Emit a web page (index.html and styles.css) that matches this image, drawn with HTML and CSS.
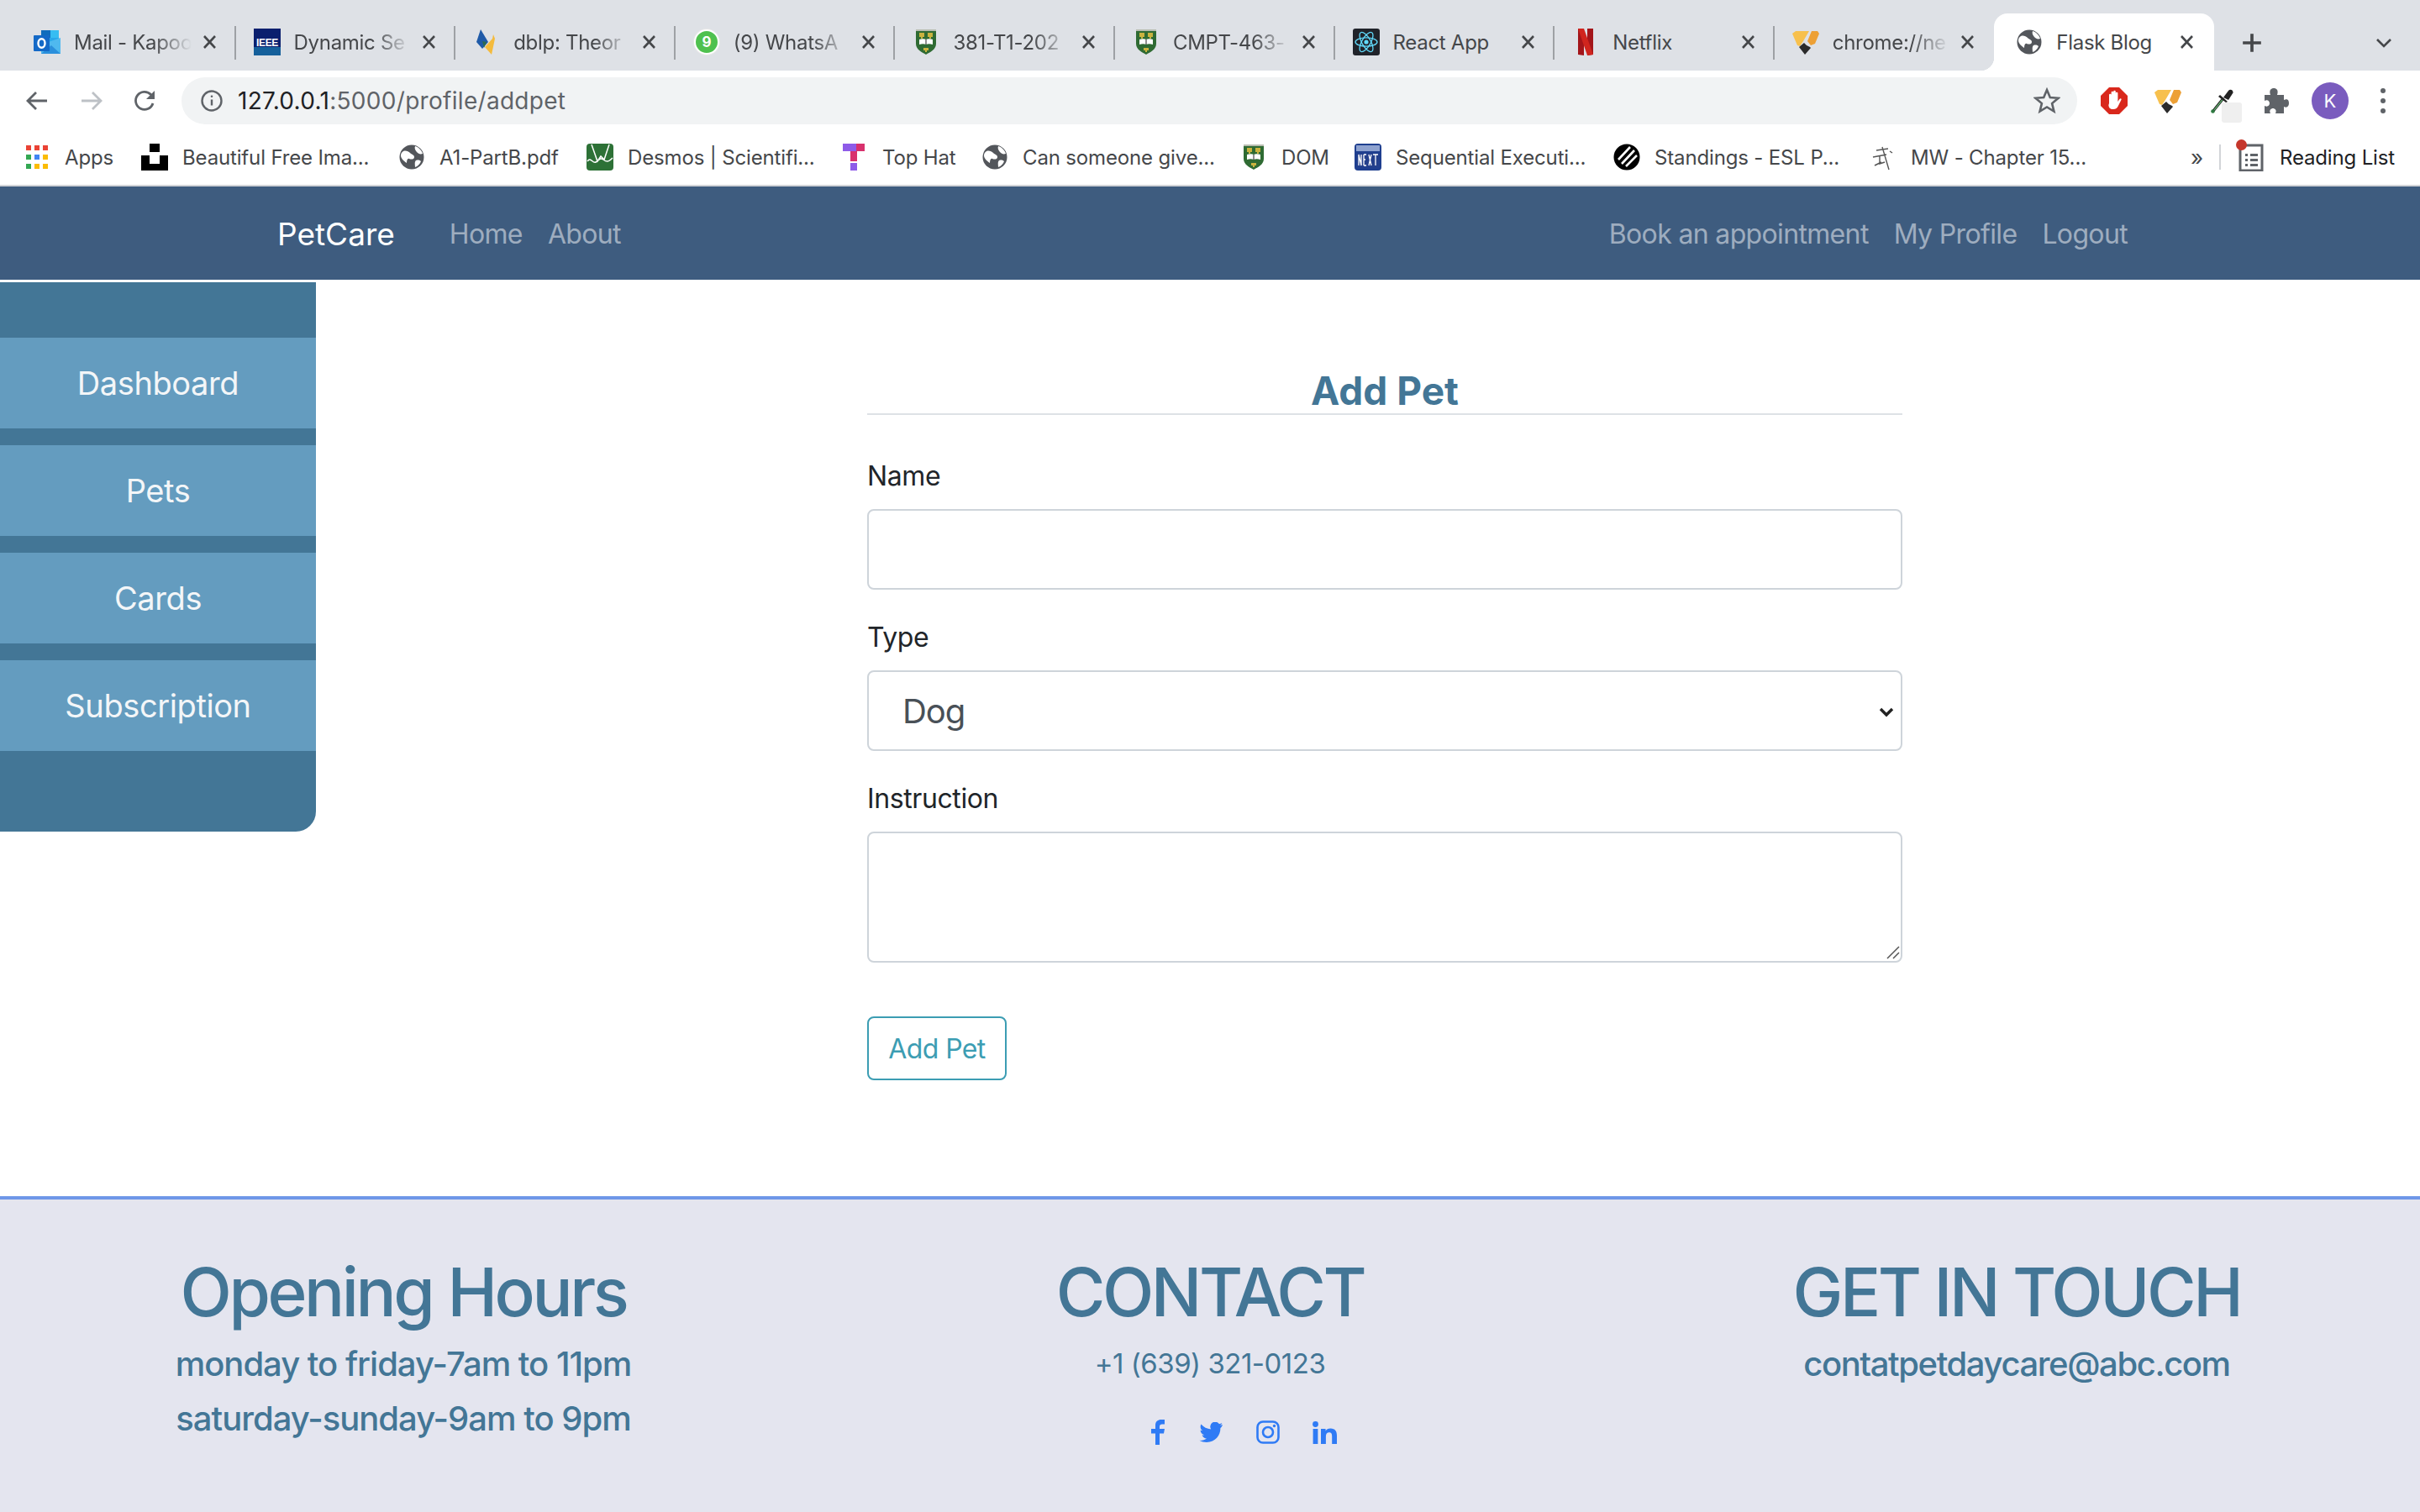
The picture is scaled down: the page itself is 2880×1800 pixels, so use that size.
FILE: index.html
```html
<!DOCTYPE html>
<html lang="en">
<head>
<meta charset="utf-8">
<title>Flask Blog</title>
<link rel="stylesheet" href="styles.css">
</head>
<body>
<svg class="defs" xmlns="http://www.w3.org/2000/svg">
  <symbol id="globe" viewBox="0 0 32 32"><circle cx="16" cy="16" r="14.5" fill="#53565b"/><path d="M6 9c3-1 6 0 8 2s5 2 5 5-4 3-6 2-3 2-3 5c-3-2-7-5-7-9 0-2 1-4 3-5zM20 3c4 1 8 5 9 9-3 1-5 0-7-2s-3-5-2-7zM21 20c3-1 5 0 6 1-1 3-4 6-7 7 0-3-1-6 1-8z" fill="#fff"/></symbol>
  <symbol id="shield" viewBox="0 0 32 32"><path d="M4 1h24v17c0 7-7 10-12 13C11 28 4 25 4 18z" fill="#2f6b33"/><path d="M4 1h24v2H4z" fill="#b8bdb0"/><path d="M8 5h6v5h-2v2h-2v-2H8zM18 5h6v5h-2v2h-2v-2h-2zM13 23h6v3h-2v2h-2v-2h-2z" fill="#c9b33f"/><path d="M8 19c3-1 6-1 8 0 2-1 5-1 8 0v-6c-3-1-6-1-8 0-2-1-5-1-8 0z" fill="#fff"/><path d="M15.500 13h1v6h-1z" fill="#222"/></symbol>
  <symbol id="tri" viewBox="0 0 32 32"><path d="M0 6l4-3h16l-7 12-4 6-3-1z" fill="#f7c04d"/><path d="M23 3h7l2 3-5 12-5 2-4-5z" fill="#eda035"/><path d="M8 22l6-5 3 3 4 2 1 1-7 8z" fill="#2b2b2b"/></symbol>
</svg>

<header class="chrome">
  <div class="tabstrip">
    <div class="tab">
      <svg class="fav" viewBox="0 0 32 32"><path d="M9 2h21v26H9z" fill="#28a8ea"/><path d="M9 2h11v9H9z" fill="#0f6cbd"/><path d="M20 2h10v9H20z" fill="#36bdf2"/><path d="M9 19l23-8v19H9z" fill="#4fb9ef"/><path d="M9 30l12-10 11 10z" fill="#2a8fdc"/><rect x="0" y="8" width="19" height="19" rx="1" fill="#1469c7"/><ellipse cx="9.500" cy="17.500" rx="4" ry="5.200" fill="none" stroke="#fff" stroke-width="2.400"/></svg>
      <span class="title">Mail - Kapoo</span>
      <svg class="close" viewBox="0 0 17 16"><path d="M2 1l13 14M15 1L2 15"/></svg>
    </div>
    <div class="tab">
      <svg class="fav" viewBox="0 0 32 32"><rect width="32" height="32" fill="#0a1f6e"/><path d="M0 22h32v10H0z" fill="#15609b"/><text class="ieee" x="16" y="21">IEEE</text></svg>
      <span class="title">Dynamic Se</span>
      <svg class="close" viewBox="0 0 17 16"><path d="M2 1l13 14M15 1L2 15"/></svg>
    </div>
    <div class="tab">
      <svg class="fav" viewBox="0 0 32 32"><path d="M4 16L9 1l9 15-7 8z" fill="#1f5aa8"/><path d="M14 22l9-10 1-5 2 5-4 19-8-9z" fill="#f4bb3d"/><path d="M11 15l5 1-3 7z" fill="#2f6b4f"/></svg>
      <span class="title">dblp: Theor</span>
      <svg class="close" viewBox="0 0 17 16"><path d="M2 1l13 14M15 1L2 15"/></svg>
    </div>
    <div class="tab">
      <span class="wa"><span class="wa-n">9</span></span>
      <span class="title">(9) WhatsA</span>
      <svg class="close" viewBox="0 0 17 16"><path d="M2 1l13 14M15 1L2 15"/></svg>
    </div>
    <div class="tab">
      <svg class="fav"><use href="#shield"/></svg>
      <span class="title">381-T1-202</span>
      <svg class="close" viewBox="0 0 17 16"><path d="M2 1l13 14M15 1L2 15"/></svg>
    </div>
    <div class="tab">
      <svg class="fav"><use href="#shield"/></svg>
      <span class="title">CMPT-463-</span>
      <svg class="close" viewBox="0 0 17 16"><path d="M2 1l13 14M15 1L2 15"/></svg>
    </div>
    <div class="tab">
      <svg class="fav" viewBox="0 0 32 32"><rect width="32" height="32" rx="3" fill="#20232a"/><g fill="none" stroke="#61dafb" stroke-width="1.300"><ellipse cx="16" cy="16" rx="13" ry="5.200"/><ellipse cx="16" cy="16" rx="13" ry="5.200" transform="rotate(60 16 16)"/><ellipse cx="16" cy="16" rx="13" ry="5.200" transform="rotate(120 16 16)"/></g><circle cx="16" cy="16" r="2.600" fill="#61dafb"/></svg>
      <span class="title nofade">React App</span>
      <svg class="close" viewBox="0 0 17 16"><path d="M2 1l13 14M15 1L2 15"/></svg>
    </div>
    <div class="tab">
      <svg class="fav" viewBox="0 0 32 32"><path d="M7 0h7v32l-7-1z" fill="#a3151a"/><path d="M18 0h7v31l-7 1z" fill="#a3151a"/><path d="M7 0h7l11 31-7 1z" fill="#d0251e"/></svg>
      <span class="title nofade">Netflix</span>
      <svg class="close" viewBox="0 0 17 16"><path d="M2 1l13 14M15 1L2 15"/></svg>
    </div>
    <div class="tab tab-last">
      <svg class="fav"><use href="#tri"/></svg>
      <span class="title">chrome://ne</span>
      <svg class="close" viewBox="0 0 17 16"><path d="M2 1l13 14M15 1L2 15"/></svg>
    </div>
    <div class="tab tab-active">
      <svg class="fav"><use href="#globe"/></svg>
      <span class="title nofade">Flask Blog</span>
      <svg class="close" viewBox="0 0 17 16"><path d="M2 1l13 14M15 1L2 15"/></svg>
    </div>
    <svg class="newtab" viewBox="0 0 24 24"><path d="M12 2v20M2 12h20"/></svg>
    <svg class="tabmenu" viewBox="0 0 20 12"><path d="M2 2l8 8 8-8"/></svg>
  </div>

  <div class="toolbar">
    <svg class="tb back" viewBox="0 0 28 28"><path d="M26 14H4M13 4L3 14l10 10"/></svg>
    <svg class="tb forward" viewBox="0 0 28 28"><path d="M2 14h22M15 4l10 10-10 10"/></svg>
    <svg class="tb reload" viewBox="0 0 28 28"><path d="M24 17a10.500 10.500 0 1 1-2.500-10.500L25 10"/><path class="solid" d="M26 2v10H16z"/></svg>
    <div class="omnibox">
      <svg class="info" viewBox="0 0 26 26"><circle cx="13" cy="13" r="11.500"/><path d="M13 11.500v7"/><circle class="solid" cx="13" cy="7.800" r="1.300"/></svg>
      <span class="url"><span class="host">127.0.0.1</span>:5000/profile/addpet</span>
      <svg class="star" viewBox="0 0 32 32"><path d="M16 3l3.800 9 9.700.8-7.400 6.300 2.300 9.500L16 23.500l-8.400 5.100 2.300-9.500L2.500 12.800l9.700-.8z"/></svg>
    </div>
    <div class="extensions">
      <svg class="ext" viewBox="0 0 32 32"><path d="M10 0h12l10 10v12L22 32H10L0 22V10z" fill="#d9281c"/><path d="M10 19V9a1.300 1.300 0 0 1 2.600 0v5V6a1.300 1.300 0 0 1 2.600 0v8V5a1.300 1.300 0 0 1 2.600 0v9V7a1.300 1.300 0 0 1 2.600 0v10l2-3c1-1.500 3-.5 2 1l-4 8c-1 2-3 3-5 3h-1c-3 0-5-2-5-5z" fill="#fff"/></svg>
      <svg class="ext"><use href="#tri"/></svg>
      <span class="dropper">
        <svg class="ext" viewBox="0 0 32 32"><path d="M6 28L18 13" stroke="#222" stroke-width="3.200" fill="none"/><path d="M7 27L17 14.500" stroke="#5fa86b" stroke-width="1.400" fill="none"/><circle cx="5.500" cy="28.500" r="2.300" fill="#2f7a42"/><path d="M14 9l9 8-2 1-9-7z" fill="#222"/><path d="M18 12l6-8c2-2.500 6-.8 5.500 2.500L24 15z" fill="#222"/></svg>
        <span class="ext-badge"></span>
      </span>
      <svg class="ext" viewBox="0 0 32 32"><path d="M3 9h7c-2-6 1-8 4-8s6 2 4 8h8v6c5-2 6 1 6 4s-2 6-6 4v8H16c2-4-1-6-3-6s-5 2-3 6H3v-9c4 2 6-1 6-3s-2-5-6-3z" fill="#5f6368"/></svg>
      <span class="avatar">K</span>
      <svg class="dots" viewBox="0 0 8 32"><circle cx="4" cy="4" r="3"/><circle cx="4" cy="16" r="3"/><circle cx="4" cy="28" r="3"/></svg>
    </div>
  </div>

  <div class="bookmarks">
    <div class="bm bm-apps">
      <svg class="bmi" viewBox="0 0 32 32"><g><rect x="3" y="2" width="6" height="6" fill="#ea4335"/><rect x="13" y="2" width="6" height="6" fill="#ea4335"/><rect x="23" y="2" width="6" height="6" fill="#ea4335"/><rect x="3" y="13" width="6" height="6" fill="#34a853"/><rect x="13" y="13" width="6" height="6" fill="#4285f4"/><rect x="23" y="13" width="6" height="6" fill="#fbbc05"/><rect x="3" y="24" width="6" height="6" fill="#34a853"/><rect x="13" y="24" width="6" height="6" fill="#fbbc05"/><rect x="23" y="24" width="6" height="6" fill="#fbbc05"/></g></svg>
      <span>Apps</span>
    </div>
    <div class="bm bm-2">
      <svg class="bmi" viewBox="0 0 32 32"><path d="M10 0h12v10H10zM0 14h10v10h12V14h10v18H0z" fill="#000"/></svg>
      <span>Beautiful Free Ima...</span>
    </div>
    <div class="bm bm-3">
      <svg class="bmi"><use href="#globe"/></svg>
      <span>A1-PartB.pdf</span>
    </div>
    <div class="bm bm-4">
      <svg class="bmi" viewBox="0 0 32 32"><rect width="32" height="32" rx="4" fill="#2d7136"/><path d="M6 1l7 20 4-6 4 4 6-18M1 21c4-6 6 3 10 1s5-6 9-3 6 3 11-2" fill="none" stroke="#fff" stroke-width="1.500"/></svg>
      <span>Desmos | Scientifi...</span>
    </div>
    <div class="bm bm-5">
      <svg class="bmi" viewBox="0 0 32 32"><path d="M2 0h16v9H2z" fill="#8e5be8"/><path d="M18 0h10v9H18zM11 9h8v12h-8z" fill="#d8316d"/><path d="M11 23h8v9h-8z" fill="#8e5be8"/></svg>
      <span>Top Hat</span>
    </div>
    <div class="bm bm-6">
      <svg class="bmi"><use href="#globe"/></svg>
      <span>Can someone give...</span>
    </div>
    <div class="bm bm-7">
      <svg class="bmi"><use href="#shield"/></svg>
      <span>DOM</span>
    </div>
    <div class="bm bm-8">
      <svg class="bmi" viewBox="0 0 32 32"><rect width="32" height="32" rx="4" fill="#1f3f8f"/><rect x="2" y="2" width="28" height="7" fill="#8ea2cf"/><path d="M3 12h26v16H3z" fill="#24408c"/><path d="M5 26V13l3 13V13M11 13h3M11 19h2M11 26h3M11 13v13M17 13l3 13M20 13l-3 13M22 13h6M25 13v13" fill="none" stroke="#fff" stroke-width="1.300"/></svg>
      <span>Sequential Executi...</span>
    </div>
    <div class="bm bm-9">
      <svg class="bmi" viewBox="0 0 32 32"><circle cx="16" cy="16" r="15.500" fill="#000"/><path d="M6 19L20 4M10 24L25 8M15 27L28 14" stroke="#fff" stroke-width="2.600"/></svg>
      <span>Standings - ESL P...</span>
    </div>
    <div class="bm bm-10">
      <svg class="bmi" viewBox="0 0 32 32"><path d="M8 8l14-2M4 16l16-3M15 4l8 27M12 14v10l6-2M6 26l8-4M24 9l3 2" fill="none" stroke="#555" stroke-width="1.400"/></svg>
      <span>MW - Chapter 15...</span>
    </div>
    <div class="bm-end">
      <span class="more">»</span>
      <span class="bm-sep"></span>
      <span class="reading">
        <svg class="ricon" viewBox="0 0 34 38"><path d="M5 7h26v30H5z" fill="none" stroke="#5f6368" stroke-width="3"/><path d="M11 17h3v3h-3zM17 17h9v3h-9zM11 23h3v3h-3zM17 23h9v3h-9zM11 29h3v3h-3zM17 29h9v3h-9z" fill="#5f6368"/><circle cx="6.500" cy="6.500" r="6.500" fill="#c5372c"/></svg>
        <span class="rtext">Reading List</span>
      </span>
    </div>
  </div>
</header>

<nav class="navbar">
  <a class="brand">PetCare</a>
  <ul class="nav-left">
    <li>Home</li>
    <li>About</li>
  </ul>
  <ul class="nav-right">
    <li>Book an appointment</li>
    <li>My Profile</li>
    <li>Logout</li>
  </ul>
</nav>

<main class="page">
  <aside class="sidebar">
    <a class="side-item">Dashboard</a>
    <a class="side-item">Pets</a>
    <a class="side-item">Cards</a>
    <a class="side-item">Subscription</a>
  </aside>
  <form class="pet-form">
    <h2 class="form-title">Add Pet</h2>
    <div class="field">
      <label class="label" for="name">Name</label>
      <input class="control" id="name" type="text">
    </div>
    <div class="field">
      <label class="label" for="type">Type</label>
      <div class="select-wrap">
        <select class="control select" id="type"><option>Dog</option><option>Cat</option></select>
        <svg class="chev" viewBox="0 0 18 12"><path d="M2 2l7 7 7-7"/></svg>
      </div>
    </div>
    <div class="field field-last">
      <label class="label" for="instruction">Instruction</label>
      <div class="select-wrap">
        <textarea class="control area" id="instruction"></textarea>
        <svg class="grip" viewBox="0 0 16 16"><path d="M1 15L15 1M8 15l7-7"/></svg>
      </div>
    </div>
    <button class="btn" type="button">Add Pet</button>
  </form>
</main>

<footer class="footer">
  <section class="fcol">
    <h2 class="fhead">Opening Hours</h2>
    <p class="fline">monday to friday-7am to 11pm</p>
    <p class="fline">saturday-sunday-9am to 9pm</p>
  </section>
  <section class="fcol">
    <h2 class="fhead">CONTACT</h2>
    <p class="fline phone">+1 (639) 321-0123</p>
    <div class="social">
      <svg class="si si-f" viewBox="0 0 16 30"><path d="M5 30V16.500H0V11h5V7c0-5 3-7 7-7h4v5.500h-3c-2 0-3 1-3 3V11h6l-1 5.500h-5V30z"/></svg>
      <svg class="si si-t" viewBox="0 0 28 24"><path d="M28 3c-1 .5-2 .8-3 .9 1-.6 2-1.700 2.400-2.900-1 .6-2.200 1-3.400 1.300A5.700 5.700 0 0 0 14.200 8.500C9.500 8.300 5.300 6 2.400 2.600c-1.500 2.700-.7 6 1.800 7.700-1 0-1.800-.3-2.600-.7 0 2.800 2 5.100 4.600 5.700-.8.200-1.700.2-2.600.1.700 2.300 2.900 3.900 5.400 4-2.500 1.900-5.600 2.800-8.500 2.400C3 23.400 6 24 9 24c10.700 0 16.700-9 16.400-17 1-.7 1.900-1.700 2.600-4z"/></svg>
      <svg class="si si-i" viewBox="0 0 28 28"><rect class="line" x="1.500" y="1.500" width="25" height="25" rx="6.500"/><circle class="line" cx="14" cy="14" r="6"/><circle cx="21.500" cy="6.500" r="1.700"/></svg>
      <svg class="si si-l" viewBox="0 0 29 27"><circle cx="3.500" cy="3.500" r="3.400"/><path d="M.6 9h5.800v18H.6zM10 9h5.600v2.500c1-1.800 3-3 5.800-3 5.500 0 7.600 3.500 7.600 8.500v10h-5.800v-9c0-2.500-.5-4.700-3.300-4.700s-4 2-4 4.700v9H10z"/></svg>
    </div>
  </section>
  <section class="fcol">
    <h2 class="fhead">GET IN TOUCH</h2>
    <p class="fline email">contatpetdaycare@abc.com</p>
  </section>
</footer>
</body>
</html>
```

FILE: styles.css
```css
* { box-sizing: border-box; }
html, body { margin: 0; padding: 0; }
body {
  width: 2880px;
  height: 1800px;
  overflow: hidden;
  background: #fff;
  font-family: Inter, "Liberation Sans", sans-serif;
  display: flex;
  flex-direction: column;
}
.defs { display: none; }

/* browser chrome */
.chrome { flex: none; }
.tabstrip {
  height: 84px;
  background: #dee1e6;
  display: flex;
  align-items: flex-end;
  padding-left: 19px;
  position: relative;
}
.tab {
  width: 261.6px;
  height: 68px;
  display: flex;
  align-items: center;
  padding: 0 23px 0 21px;
  position: relative;
  font-size: 24px;
  letter-spacing: -0.3px;
  color: #45474a;
}
.tab::after {
  content: "";
  position: absolute;
  right: 0;
  top: 15px;
  height: 40px;
  width: 2px;
  background: #9ea1a5;
}
.tab-last::after, .tab-active::after { display: none; }
.tab-active {
  background: #fff;
  border-radius: 16px 16px 0 0;
  padding-left: 26px;
  padding-right: 24px;
}
.tab-active::before {
  content: "";
  position: absolute;
  left: -16px;
  bottom: 0;
  width: 16px;
  height: 16px;
  background: radial-gradient(circle at 0 0, transparent 16px, #fff 16.5px);
}
.fav { width: 32px; height: 32px; flex: none; }
.ieee { fill: #fff; font-family: "Liberation Sans", sans-serif; font-size: 12px; font-weight: 700; text-anchor: middle; }
.title {
  flex: 1;
  min-width: 0;
  margin: 0 13px 0 16px;
  white-space: nowrap;
  -webkit-mask-image: linear-gradient(90deg, #000 68%, transparent 100%);
  mask-image: linear-gradient(90deg, #000 68%, transparent 100%);
}
.title.nofade { -webkit-mask-image: none; mask-image: none; }
.close { width: 17px; height: 16px; flex: none; fill: none; stroke: #45474a; stroke-width: 2.600; }
.wa {
  width: 30px;
  height: 30px;
  margin: 0 1px;
  flex: none;
  border-radius: 50%;
  background: #4fc14f;
  border: 2px solid #fff;
  box-shadow: 0 0 0 1px #e8e8e8;
  display: flex;
  align-items: center;
  justify-content: center;
}
.wa-n { color: #fff; font-size: 17px; font-weight: 700; }
.newtab { width: 26px; height: 26px; margin: 0 0 0 32px; align-self: center; fill: none; stroke: #45474a; stroke-width: 3.400; position: relative; top: 9px; }
.tabmenu { width: 20px; height: 12px; margin-left: 134px; align-self: center; fill: none; stroke: #45474a; stroke-width: 2.600; position: relative; top: 9px; }

.toolbar {
  height: 64px;
  background: #fff;
  display: flex;
  align-items: flex-start;
  padding-top: 8px;
  padding-left: 30px;
}
.tb { width: 28px; height: 28px; margin-top: 14px; flex: none; fill: none; stroke-width: 2.800; }
.back { stroke: #5f6368; }
.forward { stroke: #bdc1c6; margin-left: 37px; }
.reload { stroke: #5f6368; margin-left: 35px; }
.reload .solid { fill: #5f6368; stroke: none; }
.omnibox {
  width: 2256px;
  height: 56px;
  margin-left: 30px;
  background: #f1f3f4;
  border-radius: 28px;
  display: flex;
  align-items: center;
  padding: 0 20px 0 23px;
}
.info { width: 26px; height: 26px; flex: none; fill: none; stroke: #5f6368; stroke-width: 2.400; }
.info .solid { fill: #5f6368; stroke: none; }
.url { flex: 1; margin-left: 18px; font-size: 28px; letter-spacing: 0.3px; color: #5f6368; white-space: nowrap; }
.host { color: #202124; }
.star { width: 32px; height: 32px; flex: none; fill: none; stroke: #5f6368; stroke-width: 2.600; }
.extensions { display: flex; align-items: center; height: 56px; margin-left: 28px; }
.ext { width: 32px; height: 32px; flex: none; display: block; }
.extensions > * + * { margin-left: 32px; }
.dropper { position: relative; display: block; }
.ext-badge { position: absolute; left: 16px; top: 18px; width: 24px; height: 24px; border-radius: 3px; background: #efefef; }
.avatar {
  width: 44px;
  height: 44px;
  border-radius: 50%;
  background: #7a5cbe;
  color: #fff;
  font-size: 22px;
  display: flex;
  align-items: center;
  justify-content: center;
  flex: none;
  margin-left: 27px !important;
}
.dots { width: 8px; height: 32px; fill: #5f6368; flex: none; margin-left: 37px !important; }

.bookmarks {
  height: 74px;
  border-bottom: 2px solid #d2d4d8;
  background: #fff;
  display: flex;
  align-items: center;
  font-size: 24px;
  letter-spacing: -0.15px;
  color: #45474a;
  white-space: nowrap;
  padding: 6px 0 0 28px;
}
.bm { display: flex; align-items: center; flex: none; }
.bmi { width: 32px; height: 32px; flex: none; margin-right: 17px; }
.bm-apps { width: 140px; }
.bm-2 { width: 306px; }
.bm-3 { width: 224px; }
.bm-4 { width: 303px; }
.bm-5 { width: 167px; }
.bm-6 { width: 308px; }
.bm-7 { width: 136px; }
.bm-8 { width: 308px; }
.bm-9 { width: 305px; }
.bm-10 { width: 0; }
.bm-end { display: flex; align-items: center; margin-left: auto; padding-right: 30px; }
.more { font-size: 26px; margin-right: 19px; }
.bm-sep { width: 2px; height: 30px; background: #d2d4d8; margin-right: 18px; }
.reading { display: flex; align-items: center; color: #202124; }
.ricon { width: 34px; height: 38px; margin-right: 18px; position: relative; top: -2px; }

/* navbar */
.navbar {
  flex: none;
  height: 111px;
  background: #3e5c7f;
  display: flex;
  align-items: center;
  padding: 2px 348px 0 330px;
  font-size: 32px;
  letter-spacing: -0.65px;
}
.brand { color: #fff; font-size: 37px; letter-spacing: 0; margin-right: 65px; }
.nav-left, .nav-right { list-style: none; margin: 0; padding: 0; display: flex; gap: 30px; color: rgba(255,255,255,.5); }
.nav-right { margin-left: auto; }

/* body */
.page { flex: 1; min-height: 0; display: flex; align-items: flex-start; padding-top: 3px; }
.sidebar {
  flex: none;
  width: 376px;
  height: 654px;
  background: #437696;
  border-radius: 0 0 24px 0;
  padding-top: 66px;
  display: flex;
  flex-direction: column;
  gap: 20px;
}
.side-item {
  height: 108px;
  background: #649cbf;
  color: #f3f6f8;
  font-size: 38px;
  letter-spacing: -0.4px;
  display: flex;
  align-items: center;
  justify-content: center;
}
.pet-form { width: 1232px; margin-left: 656px; padding-top: 99px; }
.form-title {
  margin: 0 0 48px;
  height: 59px;
  border-bottom: 2px solid #dee2e6;
  color: #437696;
  text-align: center;
  font-size: 46px;
  line-height: 60px;
  font-weight: 700;
}
.field { margin-bottom: 32px; }
.label { display: block; font-size: 32px; letter-spacing: -0.4px; line-height: 50px; margin-bottom: 14px; color: #212529; }
.control {
  display: block;
  width: 100%;
  height: 96px;
  border: 2px solid #ced4da;
  border-radius: 8px;
  background: #fff;
  font-family: inherit;
  font-size: 40px;
  letter-spacing: -1px;
  color: #495057;
  outline: none;
  margin: 0;
}
.select { appearance: none; -webkit-appearance: none; padding: 0 40px; }
.area { height: 156px; resize: none; }
.field-last { margin-bottom: 64px; }
.select-wrap { position: relative; }
.chev { position: absolute; right: 10px; top: 44px; width: 18px; height: 12px; fill: none; stroke: #222; stroke-width: 3.400; }
.grip { position: absolute; right: 3px; top: 136px; width: 16px; height: 16px; fill: none; stroke: #555; stroke-width: 1.500; }
.btn {
  display: block;
  width: 166px;
  height: 76px;
  background: #fff;
  border: 2px solid #3c9db3;
  border-radius: 8px;
  color: #3c9db3;
  font-family: inherit;
  font-size: 32px;
  letter-spacing: -0.6px;
  padding: 0;
}

/* footer */
.footer {
  flex: none;
  height: 376px;
  background: #e4e5ef;
  border-top: 4px solid #6f97e8;
  display: grid;
  grid-template-columns: 960px 960px 960px;
  color: #437696;
  text-align: center;
  padding-top: 62px;
}
.fhead { margin: 0 0 5px; font-size: 80px; letter-spacing: -3.4px; line-height: 96px; font-weight: 500; }
.fline { margin: 0; font-size: 40px; letter-spacing: -1px; line-height: 65px; font-weight: 500; }
.email { letter-spacing: -1.4px; }
.phone { font-size: 33px; letter-spacing: -0.5px; font-weight: 400; }
.social { display: flex; justify-content: center; align-items: center; margin-top: 34px; padding-left: 80px; }
.si { fill: #2f7bf5; flex: none; }
.si .line { fill: none; stroke: #2f7bf5; stroke-width: 2.600; }
.si-f { width: 16px; height: 30px; }
.si-t { width: 28px; height: 24px; margin-left: 41px; }
.si-i { width: 28px; height: 28px; margin-left: 40px; }
.si-l { width: 29px; height: 27px; margin-left: 39px; }
```
